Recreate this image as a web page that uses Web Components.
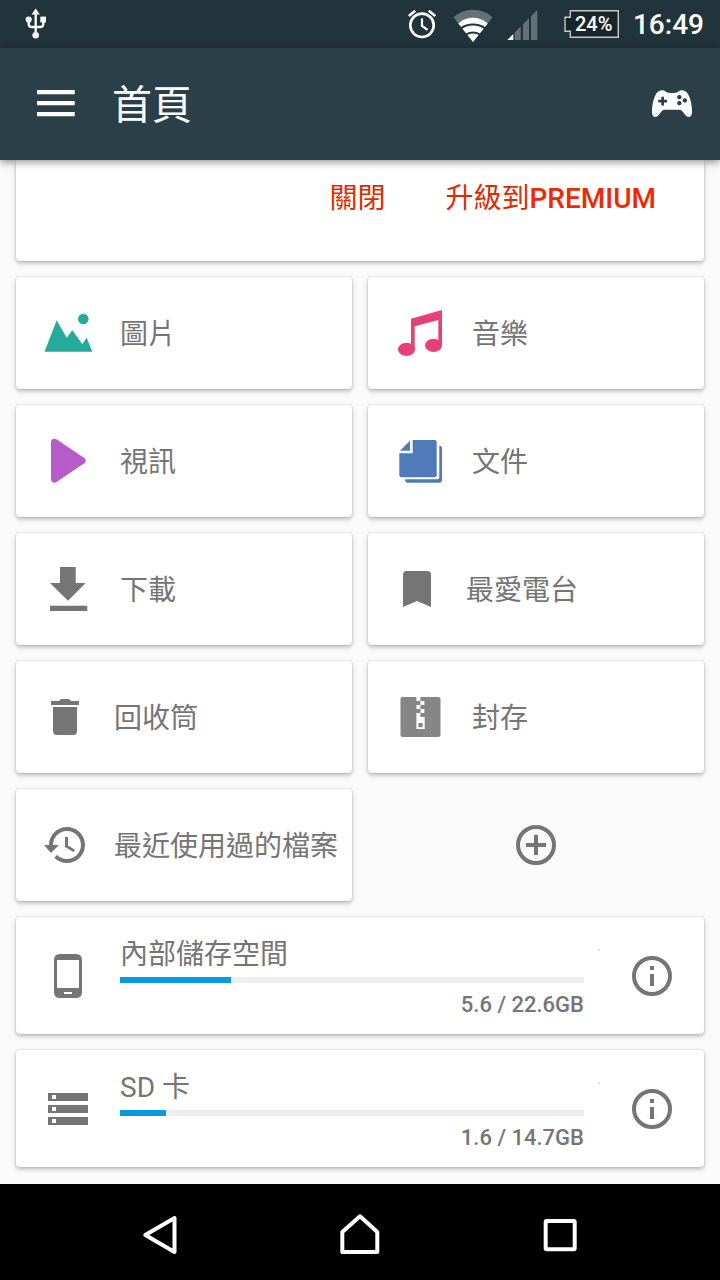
<!DOCTYPE html>
<html lang="zh-Hant">
<head>
<meta charset="utf-8">
<meta name="viewport" content="width=device-width, initial-scale=1">
<title>首頁</title>
<style>
    body {
        margin: 0;
        background: #fafafa;
        color: #757575;
        font-family: Roboto, "Noto Sans CJK TC", sans-serif;
        font-size: 28px;
    }
</style>
</head>
<body>
<file-manager></file-manager>

<script>
// [width, height, markup]
const ICONS = {
    usb: [24, 36, `
        <path d="M11.7 6v20M4.7 13v5q0 3 3 3h8.600q3 0 3-3v-5" fill="none" stroke="currentColor" stroke-width="2.3"/>
        <path d="M11.7 2.6 15.8 8.4H7.6z"/>
        <circle cx="4.7" cy="13.6" r="3.1"/><circle cx="11.7" cy="29.3" r="3.3"/>
        <path d="M16.3 10.6H22v5.8h-5.7z"/>`],
    alarm: [32, 36, `
        <g fill="none" stroke="currentColor" stroke-width="2.6">
            <circle cx="15" cy="19.3" r="11.7"/>
            <path d="M15 12.5V20l5.6 3.8" stroke-width="2.2"/>
            <path d="m1.8 10 6.4-5.2M21.8 4.8 28.3 10"/>
        </g>`],
    wifi: [40, 36, `
        <path d="M20 36 .5 11.2Q8.5 3.7 20 3.7t19.5 7.5z" opacity=".3"/>
        <path d="M20 36 5.3 17.6Q11.5 11.8 20 11.8t14.7 5.8z"/>
        <path d="M7.6 22.6Q13 18.6 20 18.6t12.4 4M12.4 29Q15.5 26.6 20 26.6t7.6 2.4" fill="none" stroke="#22343b" stroke-width="2"/>`],
    signal: [32, 36, `
        <path d="M.3 34h6v-6z"/>
        <path d="M7.7 34h6V20.6l-6 6zM16 34h6V12.3l-6 6zM24 34h6.3V4L24 10.3z" opacity=".3"/>`],
    battery: [55, 36, `
        <path d="M6.3 4.7h48v26.6h-48v-6H1v-14h5.3z" fill="#17242a" stroke="#c3cacc" stroke-width="1.4"/>`],
    menu: [40, 40, `<path d="M1 6h37.7v4.3H1zM1 17h37.7v4.3H1zM1 28h37.7v4.3H1z"/>`],
    gamepad: [40, 40, `
        <path fill-rule="evenodd" d="M3.2 33C1 33 0 31 0 27.5c0-5 .8-10.5 3-15.5 1.7-4 4.5-5.7 7.7-5.7 2 0 3.2 1.7 4.6 2.3 1.2.6 8.2.6 9.4 0 1.4-.6 2.6-2.3 4.6-2.3 3.2 0 6 1.7 7.7 5.7 2.2 5 3 10.5 3 15.5 0 3.5-1 5.5-3.2 5.5-3.8 0-5.8-7.3-9-7.3H12.2C9 25.7 7 33 3.2 33z
            M9.3 12.7v3h-3v2.7h3v3H12v-3h3v-2.7h-3v-3z
            M27.3 10.9a2.2 2.2 0 1 0 .1 0zM32.8 14.3a2.2 2.2 0 1 0 .1 0zM27.3 17a2.2 2.2 0 1 0 .1 0z"/>`],
    picture: [48, 48, `
        <path d="M.5 42.7 12.7 11.3l10 17.4 5.6-7.4 10 13.7 4.4-6.3 5.6 14z"/>
        <circle cx="39.3" cy="10" r="5.3"/>`],
    music: [48, 48, `
        <path d="M15 9.7 46 1v35h-3.7V11L18.7 17.3v23H15z"/>
        <ellipse cx="10.5" cy="40.3" rx="8.5" ry="6.6"/><ellipse cx="37.5" cy="36.3" rx="8.5" ry="6.6"/>`],
    video: [48, 48, `<path d="M10.5 5.2 38 23.7 10.5 42.2z" stroke="currentColor" stroke-width="7" stroke-linejoin="round"/>`],
    document: [48, 48, `
        <path d="M16.7 3h22q2 0 2 2v33.3q0 2-2 2H5.3q-2 0-2-2v-22h13.4z"/>
        <path d="M4 13.7h10v-10z"/>
        <path d="M43.3 8.7q2.7 0 2.7 2v32.6q0 2.4-2.4 2.4H11.5q-2.5 0-2.5-3.4h32.3q2 0 2-2z"/>`],
    download: [48, 48, `<path d="M16 2h15.7v16h10L24 35.7 6 18h10zM6 40.7h37.3V46H6z"/>`],
    bookmark: [42, 42, `<path d="M7 39V6.5Q7 3 10.5 3h21Q35 3 35 6.5V39l-14-6z"/>`],
    trash: [42, 42, `<path d="M7 5h8l2-2h8l2 2h8v4H7zM9 11h24v24q0 4-4 4H13q-4 0-4-4z"/>`],
    archive: [48, 48, `
        <path fill-rule="evenodd" d="M6.5 4h36q2 0 2 2v36q0 2-2 2h-36q-2 0-2-2V6q0-2 2-2z
            M20.4 4v4h4V4zM24.4 8v4h4V8zM20.4 12v4h4v-4zM24.4 16v4h4v-4z
            M20.4 20v16h8.300V24h-4.300v-4zM22.400 30h4.300v4.300h-4.300z"/>`],
    history: [42, 42, `
        <path transform="translate(-3 -3) scale(2)" d="M13 3c-4.970 0-9 4.030-9 9H1.500l3.390 3.890.070.140L9 12H6c0-3.870 3.130-7 7-7s7 3.130 7 7-3.130 7-7 7c-1.930 0-3.680-.790-4.940-2.060l-1.420 1.420C8.270 19.990 10.510 21 13 21c4.970 0 9-4.030 9-9s-4.030-9-9-9zm-1 5v5l4.280 2.540.72-1.210-3.500-2.080V8H12z"/>`],
    add: [48, 48, `
        <circle cx="24" cy="24" r="18" fill="none" stroke="currentColor" stroke-width="4"/>
        <path d="M22 14h4v8h8v4h-8v8h-4v-8h-8v-4h8z"/>`],
    info: [48, 48, `
        <circle cx="24" cy="24" r="18" fill="none" stroke="currentColor" stroke-width="4"/>
        <path d="M22 14h4v4h-4zM22 22h4v12h-4z"/>`],
    phone: [48, 48, `
        <path fill-rule="evenodd" d="M16 2h16q6 0 6 6v32q0 6-6 6H16q-6 0-6-6V8q0-6 6-6zM13 8v28h22V8zM20 40v2h8v-2z"/>`],
    storage: [48, 48, `
        <path fill-rule="evenodd" d="M4 8h40v8H4zM4 20h40v8H4zM4 32h40v8H4zM8 10v4h4v-4zM8 22v4h4v-4zM8 34v4h4v-4z"/>`],
    back: [48, 48, `<path d="M9.3 27 38.5 10v34z" fill="none" stroke="currentColor" stroke-width="4" stroke-linejoin="round"/>`],
    home: [48, 48, `<path d="M24 8.3 6.3 24v20h35V24z" fill="none" stroke="currentColor" stroke-width="4" stroke-linejoin="round"/>`],
    recents: [48, 48, `<rect x="9.7" y="13" width="29" height="28.3" rx="1" fill="none" stroke="currentColor" stroke-width="4"/>`]
};

const BUTTON_RESET = `
    button {
        margin: 0;
        padding: 0;
        border: 0;
        background: none;
        color: inherit;
        font: inherit;
        text-align: start;
        cursor: pointer;
    }
`;

class AppIcon extends HTMLElement {
    constructor() {
        super();
        this.attachShadow({ mode: 'open' });
    }

    connectedCallback() {
        const [width, height, markup] = ICONS[this.getAttribute('name')];
        this.shadowRoot.innerHTML = `
            <style>
                :host { display: block; flex: none; }
                svg { display: block; overflow: visible; fill: currentColor; }
            </style>
            <svg width="${width}" height="${height}" viewBox="0 0 ${width} ${height}" aria-hidden="true">${markup}</svg>
        `;
    }
}

class StatusBar extends HTMLElement {
    constructor() {
        super();
        this.attachShadow({ mode: 'open' });
        this.shadowRoot.innerHTML = `
            <style>
                :host {
                    display: flex;
                    align-items: center;
                    height: 48px;
                    padding: 0 16px 0 24px;
                    background: #22343b;
                    color: #fff;
                    font-weight: 500;
                }
                .tray {
                    display: flex;
                    align-items: center;
                    gap: 14px;
                    margin-left: auto;
                }
                .battery {
                    display: grid;
                    align-items: center;
                    margin-left: 11px;
                    font-size: 20px;
                }
                .battery > * { grid-area: 1 / 1; }
                .battery span { padding-left: 11px; }
            </style>
            <app-icon name="usb"></app-icon>
            <div class="tray">
                <app-icon name="alarm"></app-icon>
                <app-icon name="wifi"></app-icon>
                <app-icon name="signal"></app-icon>
                <div class="battery"><app-icon name="battery"></app-icon><span>24%</span></div>
                <time>16:49</time>
            </div>
        `;
    }
}

class AppBar extends HTMLElement {
    constructor() {
        super();
        this.attachShadow({ mode: 'open' });
        this.shadowRoot.innerHTML = `
            <style>
                ${BUTTON_RESET}
                :host {
                    display: flex;
                    align-items: center;
                    gap: 36px;
                    height: 112px;
                    padding: 0 28px 0 36px;
                    background: #2a3f47;
                    color: #fff;
                    box-shadow: 0 2px 8px rgba(0, 0, 0, .45);
                }
                h1 {
                    flex: 1;
                    margin: 0;
                    padding-top: 4px;
                    font-size: 40px;
                    font-weight: 400;
                    line-height: 48px;
                }
            </style>
            <button aria-label="選單"><app-icon name="menu"></app-icon></button>
            <h1><slot></slot></h1>
            <button aria-label="遊戲"><app-icon name="gamepad"></app-icon></button>
        `;
    }
}

class SurfaceCard extends HTMLElement {
    constructor() {
        super();
        this.attachShadow({ mode: 'open' });
        this.shadowRoot.innerHTML = `
            <style>
                :host {
                    display: block;
                    border-radius: 4px;
                    background: #fff;
                    box-shadow: 0 2px 4px rgba(0, 0, 0, .28), 0 0 2px rgba(0, 0, 0, .12);
                }
            </style>
            <slot></slot>
        `;
    }
}

class PromoActions extends HTMLElement {
    constructor() {
        super();
        this.attachShadow({ mode: 'open' });
        this.shadowRoot.innerHTML = `
            <style>
                ${BUTTON_RESET}
                :host {
                    display: flex;
                    justify-content: flex-end;
                    gap: 60px;
                    padding: 19px 48px 42px;
                    color: #dd2c00;
                    line-height: 40px;
                }
                b { color: #f02800; font-weight: 500; }
            </style>
            <button>關閉</button>
            <button>升級到<b>PREMIUM</b></button>
        `;
    }
}

class CategoryTile extends HTMLElement {
    constructor() {
        super();
        this.attachShadow({ mode: 'open' });
    }

    connectedCallback() {
        this.shadowRoot.innerHTML = `
            <style>
                ${BUTTON_RESET}
                :host { display: block; }
                button {
                    display: flex;
                    align-items: center;
                    gap: 28px;
                    width: 100%;
                    height: 112px;
                    padding-left: 28px;
                    line-height: 40px;
                    white-space: nowrap;
                }
                span { padding-top: 4px; }
                app-icon { color: ${this.getAttribute('color') || 'inherit'}; }
            </style>
            <surface-card>
                <button><app-icon name="${this.getAttribute('icon')}"></app-icon><span><slot></slot></span></button>
            </surface-card>
        `;
    }
}

class StorageCard extends HTMLElement {
    constructor() {
        super();
        this.attachShadow({ mode: 'open' });
    }

    connectedCallback() {
        this.shadowRoot.innerHTML = `
            <style>
                ${BUTTON_RESET}
                :host { display: block; }
                .row {
                    display: flex;
                    align-items: center;
                    gap: 28px;
                    padding: 0 28px;
                }
                .usage {
                    flex: 1;
                    padding: 16px 0 11px;
                }
                label { display: block; line-height: 44px; }
                progress {
                    display: block;
                    appearance: none;
                    width: 100%;
                    height: 6px;
                    margin-bottom: 4px;
                    border: 0;
                }
                progress::-webkit-progress-bar { background: #eee; }
                progress::-webkit-progress-value { background: #069ae0; }
                .size {
                    font-size: 22px;
                    font-weight: 500;
                    line-height: 36px;
                    text-align: right;
                }
                .speck {
                    width: 2px;
                    height: 2px;
                    margin: 0 0 52px -14px;
                    background: #ddd;
                }
            </style>
            <surface-card>
                <div class="row">
                    <app-icon name="${this.getAttribute('icon')}"></app-icon>
                    <div class="usage">
                        <label for="used"><slot></slot></label>
                        <progress id="used" max="100" value="${this.getAttribute('percent')}"></progress>
                        <div class="size">${this.getAttribute('size')}</div>
                    </div>
                    <i class="speck"></i>
                    <button aria-label="詳細資料"><app-icon name="info"></app-icon></button>
                </div>
            </surface-card>
        `;
    }
}

class NavigationBar extends HTMLElement {
    constructor() {
        super();
        this.attachShadow({ mode: 'open' });
        this.shadowRoot.innerHTML = `
            <style>
                ${BUTTON_RESET}
                :host {
                    display: grid;
                    grid-template-columns: repeat(3, 1fr);
                    place-items: center;
                    height: 96px;
                    padding: 0 60px;
                    background: #000;
                    color: #fff;
                }
            </style>
            <button aria-label="返回"><app-icon name="back"></app-icon></button>
            <button aria-label="主畫面"><app-icon name="home"></app-icon></button>
            <button aria-label="最近的應用程式"><app-icon name="recents"></app-icon></button>
        `;
    }
}

class FileManager extends HTMLElement {
    constructor() {
        super();
        this.attachShadow({ mode: 'open' });
        this.shadowRoot.innerHTML = `
            <style>
                ${BUTTON_RESET}
                :host {
                    display: flex;
                    flex-direction: column;
                    min-height: 100vh;
                }
                header {
                    position: sticky;
                    top: 0;
                    z-index: 1;
                }
                main {
                    display: grid;
                    gap: 16px;
                    padding: 0 16px 16px;
                }
                .promo {
                    border-top-left-radius: 0;
                    border-top-right-radius: 0;
                }
                .tiles {
                    display: grid;
                    grid-template-columns: repeat(2, minmax(0, 1fr));
                    gap: 16px;
                }
                .add { place-self: center; }
                navigation-bar {
                    position: sticky;
                    bottom: 0;
                    margin-top: auto;
                }
            </style>
            <header>
                <status-bar></status-bar>
                <app-bar>首頁</app-bar>
            </header>
            <main>
                <surface-card class="promo"><promo-actions></promo-actions></surface-card>
                <div class="tiles">
                    <category-tile icon="picture" color="#25ab9b">圖片</category-tile>
                    <category-tile icon="music" color="#e83f79">音樂</category-tile>
                    <category-tile icon="video" color="#b65bc8">視訊</category-tile>
                    <category-tile icon="document" color="#4f7bb9">文件</category-tile>
                    <category-tile icon="download">下載</category-tile>
                    <category-tile icon="bookmark">最愛電台</category-tile>
                    <category-tile icon="trash">回收筒</category-tile>
                    <category-tile icon="archive" color="#868686">封存</category-tile>
                    <category-tile icon="history">最近使用過的檔案</category-tile>
                    <button class="add" aria-label="新增"><app-icon name="add"></app-icon></button>
                </div>
                <storage-card icon="phone" percent="24" size="5.6 / 22.6GB">內部儲存空間</storage-card>
                <storage-card icon="storage" percent="10" size="1.6 / 14.7GB">SD 卡</storage-card>
            </main>
            <navigation-bar></navigation-bar>
        `;
    }
}

customElements.define('app-icon', AppIcon);
customElements.define('status-bar', StatusBar);
customElements.define('app-bar', AppBar);
customElements.define('surface-card', SurfaceCard);
customElements.define('promo-actions', PromoActions);
customElements.define('category-tile', CategoryTile);
customElements.define('storage-card', StorageCard);
customElements.define('navigation-bar', NavigationBar);
customElements.define('file-manager', FileManager);
</script>
</body>
</html>
